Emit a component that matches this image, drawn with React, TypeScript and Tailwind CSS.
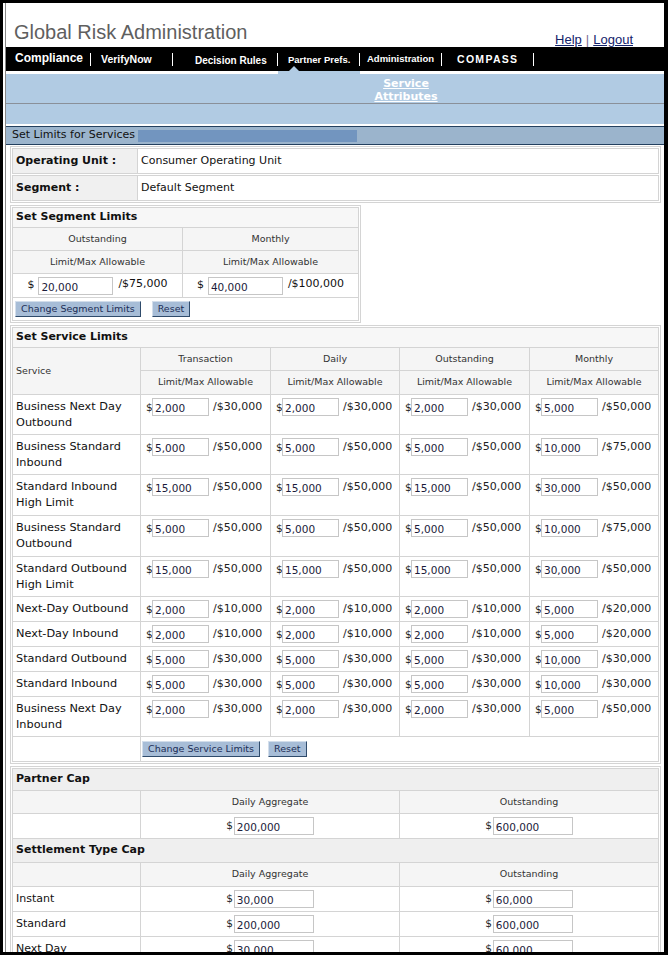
import React from "react";

type Pair = [string, string];

const services: { name: string[]; h: string; v: Pair[] }[] = [
  { name: ["Business Next Day", "Outbound"], h: "h-[40px]", v: [["2,000", "30,000"], ["2,000", "30,000"], ["2,000", "30,000"], ["5,000", "50,000"]] },
  { name: ["Business Standard", "Inbound"], h: "h-[40px]", v: [["5,000", "50,000"], ["5,000", "50,000"], ["5,000", "50,000"], ["10,000", "75,000"]] },
  { name: ["Standard Inbound", "High Limit"], h: "h-[41px]", v: [["15,000", "50,000"], ["15,000", "50,000"], ["15,000", "50,000"], ["30,000", "50,000"]] },
  { name: ["Business Standard", "Outbound"], h: "h-[41px]", v: [["5,000", "50,000"], ["5,000", "50,000"], ["5,000", "50,000"], ["10,000", "75,000"]] },
  { name: ["Standard Outbound", "High Limit"], h: "h-[40px]", v: [["15,000", "50,000"], ["15,000", "50,000"], ["15,000", "50,000"], ["30,000", "50,000"]] },
  { name: ["Next-Day Outbound"], h: "h-[25px]", v: [["2,000", "10,000"], ["2,000", "10,000"], ["2,000", "10,000"], ["5,000", "20,000"]] },
  { name: ["Next-Day Inbound"], h: "h-[25px]", v: [["2,000", "10,000"], ["2,000", "10,000"], ["2,000", "10,000"], ["5,000", "20,000"]] },
  { name: ["Standard Outbound"], h: "h-[25px]", v: [["5,000", "30,000"], ["5,000", "30,000"], ["5,000", "30,000"], ["10,000", "30,000"]] },
  { name: ["Standard Inbound"], h: "h-[25px]", v: [["5,000", "30,000"], ["5,000", "30,000"], ["5,000", "30,000"], ["10,000", "30,000"]] },
  { name: ["Business Next Day", "Inbound"], h: "h-[40px]", v: [["2,000", "30,000"], ["2,000", "30,000"], ["2,000", "30,000"], ["5,000", "50,000"]] },
];

const caps = [
  { name: "Instant", d: "30,000", o: "60,000" },
  { name: "Standard", d: "200,000", o: "600,000" },
  { name: "Next Day", d: "30,000", o: "60,000" },
];

const td = "border border-[#d4d4d4] p-0";
const head = "border border-[#d4d4d4] bg-[#f5f5f5] text-center text-[9.5px] text-[#333] font-normal p-0";

const Btn = ({ label }: { label: string }) => (
  <button className="h-[16px] px-[5px] bg-[#a7bdd7] border border-t-[#d3deeb] border-l-[#d3deeb] border-r-[#2f4b6b] border-b-[#2f4b6b] text-[9.5px] leading-none text-[#1c2d56]">
    {label}
  </button>
);

const Box = ({ children, className = "" }: { children: React.ReactNode; className?: string }) => (
  <div className={"border border-[#d4d4d4] p-px " + className}>{children}</div>
);

// "$ [input] /$max" inside a service cell
const Amount = ({ v, max }: { v: string; max: string }) => (
  <div className="flex items-start pl-[5px] pt-[3px]">
    <span className="w-[6px] text-[10.5px] leading-[18px] text-[#222]">$</span>
    <input
      readOnly
      defaultValue={v}
      className="h-[18px] w-[57px] border border-[#c6c6c6] pl-[2px] pt-[2px] text-[10.5px] text-[#1b1b3a] outline-none"
    />
    <span className="ml-[4px] text-[11px] leading-[18px] text-[#222]">/${max}</span>
  </div>
);

const Cap = ({ v }: { v: string }) => (
  <div className="flex items-center justify-center">
    <span className="mr-[1px] text-[10.5px] text-[#222]">$</span>
    <input
      readOnly
      defaultValue={v}
      className="h-[18px] w-[80px] border border-[#c6c6c6] pl-[2px] pt-[2px] text-[10.5px] text-[#1b1b3a] outline-none"
    />
  </div>
);

export default function App() {
  return (
    <div className="h-[955px] w-[668px] overflow-hidden border-t-[3px] border-l-[3px] border-r-[4px] border-b-[3px] border-black bg-white font-['DejaVu_Sans',Verdana,sans-serif] text-[#111]">
      <div className="h-full pl-[2px]">
        <div className="h-full border-l border-[#888]">
          {/* title bar */}
          <div className="flex h-[44px] justify-between">
            <div className="pl-[8px] pt-[18px] font-['Liberation_Sans',Arial,sans-serif] text-[20px] leading-[23px] text-[#5f5f5f]">
              Global Risk Administration
            </div>
            <div className="pr-[31px] pt-[29px] font-['Liberation_Sans',Arial,sans-serif] text-[13px] leading-[15px] text-[#13236b]">
              <span className="underline">Help</span>
              <span className="mx-[4px] text-[#7d6b93]">|</span>
              <span className="underline">Logout</span>
            </div>
          </div>

          {/* nav */}
          <div className="relative flex h-[24px] items-center bg-black font-['Liberation_Sans',Arial,sans-serif] font-bold text-white">
            <div className="w-[84px] pl-[9px] pb-[3px] text-[12px]">Compliance</div>
            <div className="h-[13px] w-px bg-white" />
            <div className="w-[81px] pl-[10px] pt-[2px] text-[10.5px]">VerifyNow</div>
            <div className="h-[13px] w-px bg-white" />
            <div className="w-[104px] pl-[22px] pt-[2px] text-[10px]">Decision Rules</div>
            <div className="h-[13px] w-px bg-white" />
            <div className="w-[81px] pl-[10px] pt-[2px] text-[9.5px]">Partner Prefs.</div>
            <div className="h-[13px] w-px bg-white" />
            <div className="w-[81px] pl-[7px] pt-[1px] text-[9.5px]">Administration</div>
            <div className="h-[13px] w-px bg-white" />
            <div className="w-[91px] pl-[15px] pt-[1px] text-[10.5px] tracking-[1.3px]">COMPASS</div>
            <div className="h-[13px] w-px bg-white" />
            <div className="absolute bottom-0 left-[283px] h-0 w-0 border-x-[5px] border-b-[5px] border-x-transparent border-b-[#b1cbe3]" />
          </div>
          <div className="flex h-[3px]">
            <div className="w-[272px] bg-white" />
            <div className="w-[82px] bg-[#b1cbe3]" />
            <div className="flex-1 bg-white" />
          </div>

          {/* sub nav */}
          <div className="h-[30px] border-b border-[#8a9099] bg-[#b1cbe3] pt-[3px]">
            <div className="ml-[350px] w-[100px] text-center text-[11px] font-bold leading-[13px] text-white underline">
              Service
              <br />
              Attributes
            </div>
          </div>
          <div className="h-[20px] bg-[#b1cbe3]" />
          <div className="h-[2px] bg-white" />
          <div className="flex h-[19px] items-center border-y border-[#23405f] bg-[#9bb4cc] pl-[6px] text-[11px] text-[#111]">
            <span>Set Limits for Services</span>
            <div className="ml-[3px] h-[12px] w-[219px] bg-[#7295bf]" />
          </div>

          {/* content */}
          <div className="flex flex-col gap-[2px] pl-[4px] pr-[3px] pt-[1px]">
            <Box className="flex flex-col gap-px">
              <div className="flex h-[26px] border border-[#d4d4d4]">
                <div className="flex w-[125px] items-center border-r border-[#d4d4d4] bg-[#f0f0f0] pl-[3px] text-[11px] font-bold">
                  Operating Unit :
                </div>
                <div className="flex items-center pl-[3px] text-[11px]">Consumer Operating Unit</div>
              </div>
              <div className="flex h-[26px] border border-[#d4d4d4]">
                <div className="flex w-[125px] items-center border-r border-[#d4d4d4] bg-[#f0f0f0] pl-[3px] text-[11px] font-bold">
                  Segment :
                </div>
                <div className="flex items-center pl-[3px] text-[11px]">Default Segment</div>
              </div>
            </Box>

            {/* segment limits */}
            <Box className="w-[351px]">
              <table className="w-full table-fixed border-collapse">
                <colgroup>
                  <col className="w-[170px]" />
                  <col />
                </colgroup>
                <tbody>
                  <tr className="h-[20px]">
                    <td colSpan={2} className={td + " bg-[#f7f7f7] pl-[3px] text-[11px] font-bold"}>
                      Set Segment Limits
                    </td>
                  </tr>
                  <tr className="h-[23px]">
                    <th className={head}>Outstanding</th>
                    <th className={head}>Monthly</th>
                  </tr>
                  <tr className="h-[23px]">
                    <th className={head}>Limit/Max Allowable</th>
                    <th className={head}>Limit/Max Allowable</th>
                  </tr>
                  <tr className="h-[24px]">
                    {[
                      ["20,000", "75,000"],
                      ["40,000", "100,000"],
                    ].map(([v, m]) => (
                      <td key={v} className={td}>
                        <div className="flex items-center justify-center text-[11px]">
                          <span className="mr-[4px]">$</span>
                          <input
                            readOnly
                            defaultValue={v}
                            className="h-[18px] w-[75px] border border-[#c6c6c6] pl-[2px] pt-[2px] text-[10.5px] text-[#1b1b3a] outline-none"
                          />
                          <span className="ml-[5px] pb-[2px]">/${m}</span>
                        </div>
                      </td>
                    ))}
                  </tr>
                  <tr className="h-[23px]">
                    <td colSpan={2} className={td + " pl-[2px]"}>
                      <div className="flex gap-[11px]">
                        <Btn label="Change Segment Limits" />
                        <Btn label="Reset" />
                      </div>
                    </td>
                  </tr>
                </tbody>
              </table>
            </Box>

            {/* service limits */}
            <Box>
              <table className="w-full table-fixed border-collapse">
                <colgroup>
                  <col className="w-[128px]" />
                  <col className="w-[130px]" />
                  <col className="w-[129px]" />
                  <col className="w-[130px]" />
                  <col />
                </colgroup>
                <tbody>
                  <tr className="h-[20px]">
                    <td colSpan={5} className={td + " bg-[#f7f7f7] pl-[3px] text-[11px] font-bold"}>
                      Set Service Limits
                    </td>
                  </tr>
                  <tr className="h-[23px]">
                    <th rowSpan={2} className={head + " text-left pl-[3px]"}>
                      Service
                    </th>
                    <th className={head}>Transaction</th>
                    <th className={head}>Daily</th>
                    <th className={head}>Outstanding</th>
                    <th className={head}>Monthly</th>
                  </tr>
                  <tr className="h-[24px]">
                    <th className={head}>Limit/Max Allowable</th>
                    <th className={head}>Limit/Max Allowable</th>
                    <th className={head}>Limit/Max Allowable</th>
                    <th className={head}>Limit/Max Allowable</th>
                  </tr>
                  {services.map((s) => (
                    <tr key={s.name.join(" ")} className={s.h}>
                      <td className={td + " align-top pl-[3px] pt-[4px] text-[11.3px] leading-[16px]"}>
                        {s.name.map((n) => (
                          <div key={n}>{n}</div>
                        ))}
                      </td>
                      {s.v.map(([v, m], i) => (
                        <td key={i} className={td + " align-top"}>
                          <Amount v={v} max={m} />
                        </td>
                      ))}
                    </tr>
                  ))}
                  <tr className="h-[25px]">
                    <td className={td} />
                    <td colSpan={4} className={td + " pl-[1px]"}>
                      <div className="flex gap-[8px]">
                        <Btn label="Change Service Limits" />
                        <Btn label="Reset" />
                      </div>
                    </td>
                  </tr>
                </tbody>
              </table>
            </Box>

            {/* caps */}
            <Box>
              <table className="w-full table-fixed border-collapse">
                <colgroup>
                  <col className="w-[128px]" />
                  <col className="w-[259px]" />
                  <col />
                </colgroup>
                <tbody>
                  <tr className="h-[22px]">
                    <td colSpan={3} className={td + " bg-[#efefef] pl-[3px] text-[11px] font-bold"}>
                      Partner Cap
                    </td>
                  </tr>
                  <tr className="h-[23px]">
                    <th className={head} />
                    <th className={head}>Daily Aggregate</th>
                    <th className={head}>Outstanding</th>
                  </tr>
                  <tr className="h-[25px]">
                    <td className={td} />
                    <td className={td}>
                      <Cap v="200,000" />
                    </td>
                    <td className={td}>
                      <Cap v="600,000" />
                    </td>
                  </tr>
                  <tr className="h-[24px]">
                    <td colSpan={3} className={td + " bg-[#efefef] pl-[3px] text-[11px] font-bold"}>
                      Settlement Type Cap
                    </td>
                  </tr>
                  <tr className="h-[24px]">
                    <th className={head} />
                    <th className={head}>Daily Aggregate</th>
                    <th className={head}>Outstanding</th>
                  </tr>
                  {caps.map((c) => (
                    <tr key={c.name} className="h-[25px]">
                      <td className={td + " pl-[3px] text-[11px]"}>{c.name}</td>
                      <td className={td}>
                        <Cap v={c.d} />
                      </td>
                      <td className={td}>
                        <Cap v={c.o} />
                      </td>
                    </tr>
                  ))}
                </tbody>
              </table>
            </Box>
          </div>
        </div>
      </div>
    </div>
  );
}
